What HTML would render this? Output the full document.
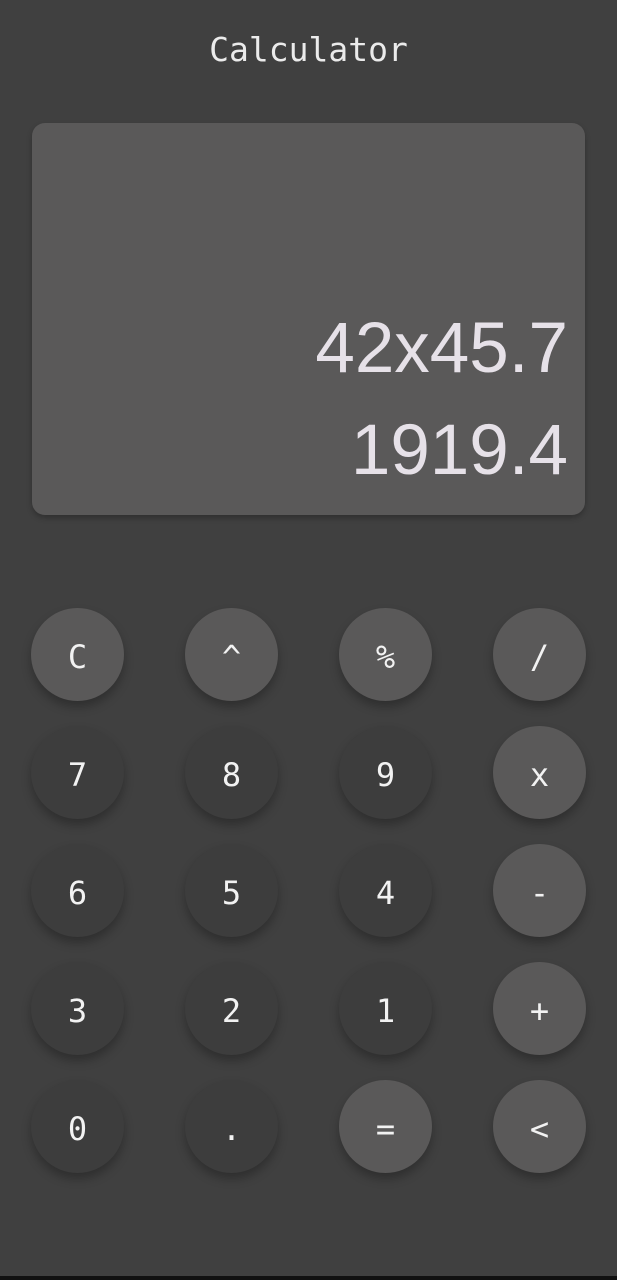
<!DOCTYPE html>
<html><head><style>
html,body{margin:0;padding:0;}
body{width:617px;height:1280px;background:#404040;position:relative;overflow:hidden;font-family:"DejaVu Sans Mono","Liberation Mono",monospace;}
.title{position:absolute;top:30px;left:0;width:617px;text-align:center;color:#ebebeb;font-size:33px;}
.disp{position:absolute;left:32px;top:123px;width:553px;height:392px;background:#5a5959;border-radius:13px;box-shadow:0 3px 6px rgba(0,0,0,.25);}
.n{position:absolute;right:17px;color:#e6e1e8;font-family:"Liberation Sans",sans-serif;font-size:71px;line-height:1;}
.b{position:absolute;width:93px;height:93px;border-radius:50%;background:#3d3d3d;color:#f2f2f2;font-size:32px;display:flex;align-items:center;justify-content:center;box-shadow:0 6px 10px rgba(0,0,0,.28);}
.b span{position:relative;top:2px;}
.l{background:#5a5959;}
.bar{position:absolute;left:0;bottom:0;width:617px;height:4px;background:#111;}
</style></head><body>
<div class="title">Calculator</div>
<div class="disp">
<div class="n" style="top:190px">42x45.7</div>
<div class="n" style="top:292px">1919.4</div>
</div>
<div class="b l" style="left:31px;top:608px"><span>C</span></div>
<div class="b l" style="left:185px;top:608px"><span>^</span></div>
<div class="b l" style="left:339px;top:608px"><span>%</span></div>
<div class="b l" style="left:493px;top:608px"><span>/</span></div>
<div class="b" style="left:31px;top:726px"><span>7</span></div>
<div class="b" style="left:185px;top:726px"><span>8</span></div>
<div class="b" style="left:339px;top:726px"><span>9</span></div>
<div class="b l" style="left:493px;top:726px"><span>x</span></div>
<div class="b" style="left:31px;top:844px"><span>6</span></div>
<div class="b" style="left:185px;top:844px"><span>5</span></div>
<div class="b" style="left:339px;top:844px"><span>4</span></div>
<div class="b l" style="left:493px;top:844px"><span>-</span></div>
<div class="b" style="left:31px;top:962px"><span>3</span></div>
<div class="b" style="left:185px;top:962px"><span>2</span></div>
<div class="b" style="left:339px;top:962px"><span>1</span></div>
<div class="b l" style="left:493px;top:962px"><span>+</span></div>
<div class="b" style="left:31px;top:1080px"><span>0</span></div>
<div class="b" style="left:185px;top:1080px"><span>.</span></div>
<div class="b l" style="left:339px;top:1080px"><span>=</span></div>
<div class="b l" style="left:493px;top:1080px"><span>&lt;</span></div>
<div class="bar"></div>
</body></html>
